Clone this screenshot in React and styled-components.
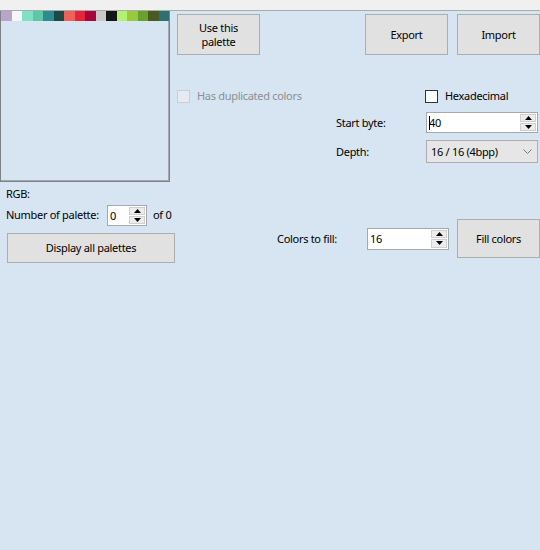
import React from 'react';
import styled, { createGlobalStyle } from 'styled-components';

const Global = createGlobalStyle`
  html, body { margin: 0; padding: 0; background: #d7e4f1; }
  body { font-family: "Noto Sans", "Liberation Sans", sans-serif; font-size: 11px; letter-spacing: -0.3px; color: #000; }
  * { box-sizing: border-box; }
`;

const Window = styled.div`
  width: 540px;
  height: 550px;
  background: #d7e4f1;
  overflow: hidden;
  display: flex;
  flex-direction: column;
`;

const TopStrip = styled.div`
  height: 11px;
  background: #f0f0f0;
  border-bottom: 1px solid #a9abaf;
`;

const Body = styled.div`
  display: flex;
  align-items: flex-start;
`;

const LeftCol = styled.div`
  width: 177px;
  flex-shrink: 0;
  display: flex;
  flex-direction: column;
`;

const PaletteBox = styled.div`
  width: 170px;
  height: 171px;
  border: 1px solid #7e8186;
  border-top: none;
  box-shadow: inset -1px -1px 0 #a4a8ae;
  display: flex;
  flex-direction: column;
`;

const SwatchRow = styled.div`
  display: flex;
  height: 10px;
`;

const Swatch = styled.div`
  flex: 1;
  background: ${p => p.$c};
`;

const Label = styled.span`
  font-size: 11px;
  line-height: 14px;
  white-space: nowrap;
  flex-shrink: 0;
  color: ${p => (p.$disabled ? '#8d8f93' : '#000')};
`;

const RgbLabel = styled(Label)`
  display: block;
  margin: 5px 0 0 6px;
`;

const PaletteRow = styled.div`
  display: flex;
  align-items: center;
  margin: 3px 0 0 6px;
  height: 22px;
`;

const PaletteLabel = styled(Label)`
  width: 101px;
`;

const OfLabel = styled(Label)`
  margin-left: 6px;
`;

const Spin = styled.div`
  width: ${p => p.$w}px;
  height: ${p => p.$h || 21}px;
  flex-shrink: 0;
  background: #fff;
  border: 1px solid #a6a8ab;
  display: flex;
  align-items: stretch;
`;

const SpinText = styled.div`
  flex: 1;
  padding-left: 2px;
  display: flex;
  align-items: center;
  font-size: 11px;
`;

const Caret = styled.span`
  display: inline-block;
  width: 1px;
  height: 14px;
  background: #000;
  margin-right: -1px;
`;

const SpinBtns = styled.div`
  width: 16px;
  display: flex;
  flex-direction: column;
  margin: 1px;
  gap: 1px;
`;

const SpinBtn = styled.div`
  flex: 1;
  background: #ececec;
  border: 1px solid #cfcfcf;
  display: flex;
  align-items: center;
  justify-content: center;
`;

const Arrow = ({ up }) => (
  <svg width="7" height="4" viewBox="0 0 7 4">
    {up ? <polygon points="0,4 7,4 3.5,0" fill="#000" /> : <polygon points="0,0 7,0 3.5,4" fill="#000" />}
  </svg>
);

const Spinner = ({ w, h, value, caret }) => (
  <Spin $w={w} $h={h}>
    <SpinText>
      {caret && <Caret />}
      {value}
    </SpinText>
    <SpinBtns>
      <SpinBtn><Arrow up /></SpinBtn>
      <SpinBtn><Arrow /></SpinBtn>
    </SpinBtns>
  </Spin>
);

const Button = styled.div`
  width: ${p => p.$w}px;
  height: ${p => p.$h}px;
  flex-shrink: 0;
  background: #e1e1e1;
  border: 1px solid #adadad;
  display: flex;
  align-items: center;
  justify-content: center;
  text-align: center;
  font-size: 11px;
  line-height: 14px;
  margin-left: ${p => p.$ml || 0}px;
  margin-top: ${p => p.$mt || 0}px;
`;

const RightArea = styled.div`
  width: 363px;
  display: flex;
  flex-direction: column;
`;

const TopButtons = styled.div`
  display: flex;
  justify-content: space-between;
  margin-top: 3px;
`;

const ButtonGroup = styled.div`
  display: flex;
  gap: 9px;
`;

const CheckRow = styled.div`
  display: grid;
  grid-template-columns: 248px auto;
  align-items: center;
  margin-top: 34px;
`;

const Check = styled.label`
  display: flex;
  align-items: center;
  gap: 7px;
`;

const Box = styled.span`
  width: 13px;
  height: 13px;
  border: 1px solid ${p => (p.$disabled ? '#c9ced4' : '#333')};
  background: ${p => (p.$disabled ? '#e6ebf1' : '#fff')};
`;

const FieldRow = styled.div`
  display: grid;
  grid-template-columns: 159px 90px 112px;
  align-items: center;
  margin-top: ${p => p.$mt}px;
`;

const Select = styled.div`
  width: 112px;
  height: 23px;
  background: #e6e6e6;
  border: 1px solid #adadad;
  display: flex;
  align-items: center;
  justify-content: space-between;
  padding: 0 5px 0 4px;
  font-size: 11px;
`;

const FillRow = styled.div`
  display: flex;
  align-items: center;
  margin-top: 56px;
  padding-left: 100px;
`;

const FillLabel = styled(Label)`
  width: 90px;
`;

const colors = [
  '#b9a4ca', '#f5f6f9', '#7ce2c2', '#5cc8aa', '#2f8b8d', '#1b4a45',
  '#f2605a', '#e3263b', '#a8053b', '#c9c9c9', '#151515', '#b4f16c',
  '#98c93e', '#6aa12d', '#4b5a22', '#2b7172',
];

export default function App() {
  return (
    <Window>
      <Global />
      <TopStrip />
      <Body>
        <LeftCol>
          <PaletteBox>
            <SwatchRow>
              {colors.map((c, i) => <Swatch key={i} $c={c} />)}
            </SwatchRow>
          </PaletteBox>
          <RgbLabel>RGB:</RgbLabel>
          <PaletteRow>
            <PaletteLabel>Number of palette:</PaletteLabel>
            <Spinner w={40} value="0" />
            <OfLabel>of 0</OfLabel>
          </PaletteRow>
          <Button $w={168} $h={30} $ml={7} $mt={7}>Display all palettes</Button>
        </LeftCol>
        <RightArea>
          <TopButtons>
            <Button $w={83} $h={41}>Use this<br />palette</Button>
            <ButtonGroup>
              <Button $w={83} $h={41}>Export</Button>
              <Button $w={83} $h={41}>Import</Button>
            </ButtonGroup>
          </TopButtons>
          <CheckRow>
            <Check>
              <Box $disabled />
              <Label $disabled>Has duplicated colors</Label>
            </Check>
            <Check>
              <Box />
              <Label>Hexadecimal</Label>
            </Check>
          </CheckRow>
          <FieldRow $mt={9}>
            <span />
            <Label>Start byte:</Label>
            <Spinner w={112} value="40" caret />
          </FieldRow>
          <FieldRow $mt={7}>
            <span />
            <Label>Depth:</Label>
            <Select>
              <span>16 / 16 (4bpp)</span>
              <svg width="9" height="5" viewBox="0 0 9 5">
                <polyline points="0.5,0.5 4.5,4.5 8.5,0.5" fill="none" stroke="#7a7a7a" strokeWidth="1" />
              </svg>
            </Select>
          </FieldRow>
          <FillRow>
            <FillLabel>Colors to fill:</FillLabel>
            <Spinner w={82} h={22} value="16" />
            <Button $w={83} $h={39} $ml={8}>Fill colors</Button>
          </FillRow>
        </RightArea>
      </Body>
    </Window>
  );
}
